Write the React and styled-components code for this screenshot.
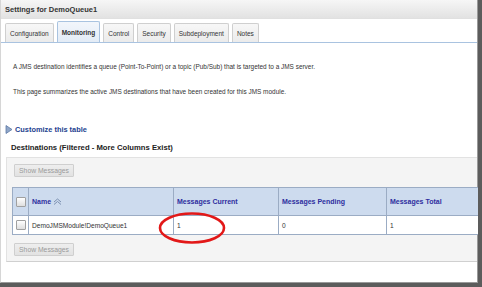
import styled, { createGlobalStyle } from "styled-components";

const GlobalStyle = createGlobalStyle`
  html, body {
    margin: 0;
    padding: 0;
    background: #ffffff;
    overflow: hidden;
  }
  body {
    font-family: "Liberation Sans", Arial, sans-serif;
  }
`;

const Frame = styled.div`
  width: 482px;
  height: 287px;
  box-sizing: border-box;
  background: #ffffff;
  border-right: 4px solid #5c5c5c;
  border-bottom: 4px solid #5c5c5c;
  overflow: hidden;
`;

const Window = styled.div`
  height: 100%;
  border-left: 1px solid #d6d6d6;
  border-right: 1px solid #9a9a9a;
  border-bottom: 1px solid #9a9a9a;
  box-sizing: border-box;
  display: flex;
  flex-direction: column;
`;

const TitleBar = styled.div`
  height: 18px;
  display: flex;
  align-items: center;
  padding-left: 4px;
  background: linear-gradient(#f6f6f6, #e2e2e2);
  border-bottom: 1px solid #e0e0e0;
  font-size: 7.5px;
  font-weight: bold;
  color: #333333;
`;

const TabBar = styled.div`
  display: flex;
  align-items: flex-end;
  gap: 3px;
  height: 24px;
  padding: 0 4px;
  box-sizing: border-box;
  border-bottom: 1px solid #a9c3e0;
`;

const Tab = styled.div`
  height: ${(p) => (p.$active ? 21 : 19)}px;
  display: flex;
  align-items: center;
  padding: 0 4px;
  box-sizing: border-box;
  border: 1px solid ${(p) => (p.$active ? "#a9c3e0" : "#cfcfcf")};
  border-bottom: none;
  border-radius: 2px 2px 0 0;
  background: ${(p) =>
    p.$active ? "linear-gradient(#f2f6fb, #e3ecf6)" : "linear-gradient(#f7f7f7, #ebebeb)"};
  font-size: 6.5px;
  font-weight: ${(p) => (p.$active ? "bold" : "normal")};
  color: #333333;
`;

const Body = styled.div`
  flex: 1;
  display: flex;
  flex-direction: column;
`;

const Intro = styled.p`
  margin: ${(p) => p.$top}px 0 0 12px;
  font-size: 6.45px;
  color: #333333;
  line-height: 8px;
`;

const Customize = styled.div`
  margin: 29px 0 0 4px;
  display: flex;
  align-items: center;
  gap: 2px;
  font-size: 7.4px;
  font-weight: bold;
  color: #1d3f8f;
`;

const SectionTitle = styled.div`
  margin: 9px 0 0 10px;
  font-size: 7.7px;
  font-weight: bold;
  color: #222222;
`;

const Panel = styled.div`
  margin: 5px 0 0 5px;
  height: 105px;
  box-sizing: border-box;
  background: #f4f4f4;
  border-top: 1px solid #e2e2e2;
  border-left: 1px solid #e2e2e2;
  border-bottom: 1px solid #d0d0d0;
  padding: 6px 0 0 5px;
  display: flex;
  flex-direction: column;
  gap: ${(p) => p.$gap}px;
`;

const Button = styled.button`
  align-self: flex-start;
  height: 13px;
  width: 60px;
  margin-left: 2px;
  padding: 0;
  font-family: "Liberation Sans", Arial, sans-serif;
  font-size: 6.8px;
  color: #9a9a9a;
  background: linear-gradient(#eeeeee, #e2e2e2);
  border: 1px solid #cfcfcf;
  border-radius: 1px;
`;

const Table = styled.table`
  border-collapse: collapse;
  width: 480px;
  table-layout: fixed;
  margin-top: 2px;
`;

const Th = styled.th`
  width: ${(p) => p.$w}px;
  height: 28px;
  padding: 0 0 0 3px;
  box-sizing: border-box;
  background: #cddbee;
  border: 1px solid #9bacc4;
  text-align: left;
  font-size: 7px;
  font-weight: bold;
  color: #2e2e9e;
  white-space: nowrap;
`;

const Td = styled.td`
  height: 19px;
  padding: 0 0 0 3px;
  box-sizing: border-box;
  background: #ffffff;
  border: 1px solid #9bacc4;
  font-size: 6.6px;
  color: #333333;
  white-space: nowrap;
`;

const Check = styled.span`
  display: inline-block;
  width: 8px;
  height: 8px;
  border: 1px solid #a0a0a0;
  border-radius: 1px;
  background: linear-gradient(#ffffff, #dedede);
  vertical-align: middle;
`;

const CircleMark = styled.svg`
  position: absolute;
  left: 158px;
  top: 211px;
  pointer-events: none;
`;

const Page = styled.div`
  position: relative;
`;

const SortIcon = () => (
  <svg width="9" height="7" viewBox="0 0 9 7" style={{ marginLeft: 2, verticalAlign: "middle" }}>
    <path d="M1 4 L4.5 1 L8 4" fill="none" stroke="#7a8fb0" strokeWidth="1" />
    <path d="M1 6.5 L4.5 3.5 L8 6.5" fill="none" stroke="#7a8fb0" strokeWidth="1" />
  </svg>
);

const tabs = ["Configuration", "Monitoring", "Control", "Security", "Subdeployment", "Notes"];

const columns = [
  { title: "Messages Current", w: 105, value: "1" },
  { title: "Messages Pending", w: 108, value: "0" },
  { title: "Messages Total", w: 106, value: "1" },
];

export default function App() {
  return (
    <Page>
      <GlobalStyle />
      <Frame>
        <Window>
          <TitleBar>Settings for DemoQueue1</TitleBar>
          <TabBar>
            {tabs.map((t) => (
              <Tab key={t} $active={t === "Monitoring"}>
                {t}
              </Tab>
            ))}
          </TabBar>
          <Body>
            <Intro $top={20}>
              A JMS destination identifies a queue (Point-To-Point) or a topic (Pub/Sub) that is
              targeted to a JMS server.
            </Intro>
            <Intro $top={17}>
              This page summarizes the active JMS destinations that have been created for this JMS
              module.
            </Intro>
            <Customize>
              <svg width="8" height="9" viewBox="0 0 8 9">
                <path d="M1 0.5 L7 4.5 L1 8.5 Z" fill="#8fa6c8" stroke="#5d7aa6" strokeWidth="0.8" />
              </svg>
              Customize this table
            </Customize>
            <SectionTitle>Destinations (Filtered - More Columns Exist)</SectionTitle>
            <Panel $gap={8}>
              <Button disabled>Show Messages</Button>
              <Table>
                <thead>
                  <tr>
                    <Th $w={16}>
                      <Check />
                    </Th>
                    <Th $w={145}>
                      Name
                      <SortIcon />
                    </Th>
                    {columns.map((c) => (
                      <Th key={c.title} $w={c.w}>
                        {c.title}
                      </Th>
                    ))}
                  </tr>
                </thead>
                <tbody>
                  <tr>
                    <Td>
                      <Check />
                    </Td>
                    <Td>DemoJMSModule!DemoQueue1</Td>
                    {columns.map((c) => (
                      <Td key={c.title}>{c.value}</Td>
                    ))}
                  </tr>
                </tbody>
              </Table>
              <Button disabled>Show Messages</Button>
            </Panel>
          </Body>
        </Window>
      </Frame>
      <CircleMark width="70" height="34" viewBox="0 0 70 34">
        <ellipse cx="34" cy="17" rx="32" ry="14.5" fill="none" stroke="#e21818" strokeWidth="2.6" />
      </CircleMark>
    </Page>
  );
}
